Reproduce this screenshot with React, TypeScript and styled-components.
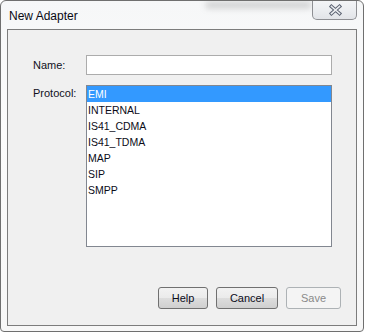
import React from "react";
import styled, { createGlobalStyle } from "styled-components";

const Global = createGlobalStyle`
  html, body { margin: 0; padding: 0; background: #ffffff; }
  body { font-family: "Liberation Sans", Arial, sans-serif; }
`;

const Window = styled.div`
  position: relative;
  box-sizing: border-box;
  width: 364px;
  height: 332px;
  border: 1px solid #6f6f6f;
  border-radius: 6px 6px 4px 4px;
  background: linear-gradient(180deg, #f6f7f8 0%, #fbfbfb 40%, #f7f7f7 100%);
  padding: 0 6px 5px 6px;
  display: flex;
  flex-direction: column;
  overflow: hidden;
`;

const GlassSmudge = styled.div`
  position: absolute;
  left: 205px;
  top: 1px;
  width: 105px;
  height: 6px;
  background: rgba(90, 90, 90, 0.28);
  filter: blur(3px);
  pointer-events: none;
`;

const TitleBar = styled.div`
  height: 28px;
  display: flex;
  align-items: flex-start;
  position: relative;
`;

const Title = styled.div`
  font-size: 12px;
  color: #0a0a14;
  padding: 8px 0 0 2px;
  line-height: 14px;
`;

const CloseButton = styled.div`
  margin-left: auto;
  margin-top: -1px;
  box-sizing: border-box;
  width: 45px;
  height: 20px;
  border: 1px solid #8e8f93;
  border-top: none;
  border-radius: 0 0 5px 5px;
  background: linear-gradient(180deg, #f4f5f7 0%, #eceef1 50%, #e2e4e8 100%);
  display: flex;
  align-items: center;
  justify-content: center;
  padding-left: 2px;
`;

const Client = styled.div`
  flex: 1;
  box-sizing: border-box;
  border: 1px solid #7c7c7c;
  background: #f0f0f0;
  display: flex;
  flex-direction: column;
  padding: 25px 15px 16px 25px;
`;

const Form = styled.div`
  display: grid;
  grid-template-columns: 53px 246px;
  row-gap: 10px;
`;

const Label = styled.div<{ $top?: number }>`
  font-size: 11px;
  color: #10101c;
  line-height: 13px;
  padding-top: ${(p) => p.$top ?? 0}px;
`;

const TextInput = styled.div`
  box-sizing: border-box;
  height: 20px;
  border: 1px solid #acacac;
  background: #ffffff;
`;

const ListBox = styled.div`
  box-sizing: border-box;
  height: 162px;
  border: 1px solid #828790;
  background: #ffffff;
  display: flex;
  flex-direction: column;
`;

const ListItem = styled.div<{ $selected?: boolean }>`
  height: 16px;
  line-height: 16px;
  font-size: 10.5px;
  padding-left: 1px;
  color: ${(p) => (p.$selected ? "#ffffff" : "#0c0c18")};
  background: ${(p) => (p.$selected ? "#3399ff" : "transparent")};
`;

const ButtonRow = styled.div`
  margin-top: auto;
  display: flex;
  justify-content: flex-end;
  gap: 8px;
`;

const Button = styled.div<{ $w: number; $disabled?: boolean }>`
  box-sizing: border-box;
  width: ${(p) => p.$w}px;
  height: 22px;
  border-radius: 3px;
  border: 1px solid ${(p) => (p.$disabled ? "#adb2b5" : "#707070")};
  background: ${(p) =>
    p.$disabled
      ? "#f4f4f4"
      : "linear-gradient(180deg, #f2f2f2 0%, #ebebeb 48%, #dddddd 52%, #cfcfcf 100%)"};
  color: ${(p) => (p.$disabled ? "#8a8a8a" : "#0c0c1a")};
  font-size: 11px;
  display: flex;
  align-items: center;
  justify-content: center;
`;

const items = ["EMI", "INTERNAL", "IS41_CDMA", "IS41_TDMA", "MAP", "SIP", "SMPP"];

export default function App() {
  return (
    <>
      <Global />
      <Window>
        <GlassSmudge />
        <TitleBar>
          <Title>New Adapter</Title>
          <CloseButton>
            <svg width="13" height="12" viewBox="0 0 13 12">
              <path d="M2.5 2.5 L10.5 9.5 M10.5 2.5 L2.5 9.5" stroke="#5d6473" strokeWidth="3.6" strokeLinecap="square" fill="none" />
              <path d="M2.5 2.5 L10.5 9.5 M10.5 2.5 L2.5 9.5" stroke="#eceef1" strokeWidth="1.6" strokeLinecap="square" fill="none" />
            </svg>
          </CloseButton>
        </TitleBar>
        <Client>
          <Form>
            <Label $top={4}>Name:</Label>
            <TextInput />
            <Label $top={2}>Protocol:</Label>
            <ListBox>
              {items.map((it, i) => (
                <ListItem key={it} $selected={i === 0}>
                  {it}
                </ListItem>
              ))}
            </ListBox>
          </Form>
          <ButtonRow>
            <Button $w={50}>Help</Button>
            <Button $w={62}>Cancel</Button>
            <Button $w={55} $disabled>
              Save
            </Button>
          </ButtonRow>
        </Client>
      </Window>
    </>
  );
}
